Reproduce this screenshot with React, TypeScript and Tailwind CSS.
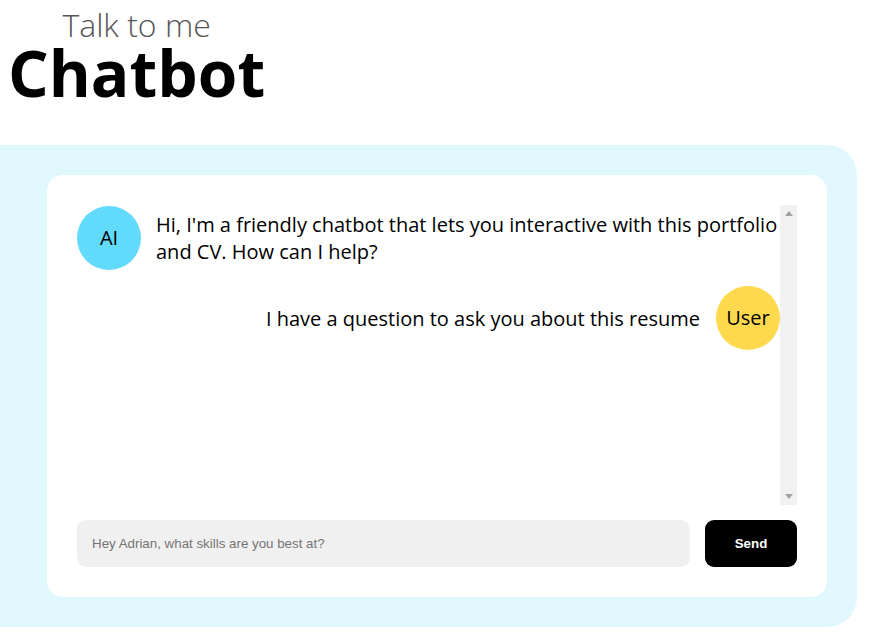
import React from "react";

export default function App() {
  return (
    <div className="w-[884px] h-[637px] bg-white overflow-hidden" style={{ fontFamily: '"Open Sans", sans-serif' }}>
      <div className="pl-[8px] pt-[5px]">
        <div className="inline-block text-center">
          <div className="text-[32px] leading-[40px] font-light text-[#555555]">Talk to me</div>
          <div className="text-[64px] leading-[56px] font-bold text-black">Chatbot</div>
        </div>
      </div>
      <div className="mt-[42px] w-[857px] h-[482px] bg-[#e0f7fd] rounded-r-[30px] pl-[47px] pr-[30px] py-[30px]">
        <div className="w-[780px] h-[422px] bg-white rounded-[16px] p-[30px] flex flex-col gap-[15px]">
          <div className="flex h-[300px]">
            <div className="flex-1 flex flex-col gap-[16px] pt-[1px]">
              <div className="flex items-center gap-[15px]">
                <div className="w-[64px] h-[64px] shrink-0 rounded-full bg-[#61dafb] flex items-center justify-center text-[20px] text-black">AI</div>
                <div className="text-[20px] leading-[27px] text-black">
                  Hi, I'm a friendly chatbot that lets you interactive with this portfolio and CV. How can I help?
                </div>
              </div>
              <div className="flex items-center justify-end gap-[16px]">
                <div className="text-[20px] leading-[27px] text-black">I have a question to ask you about this resume</div>
                <div className="w-[64px] h-[64px] shrink-0 rounded-full bg-[#ffd94d] flex items-center justify-center text-[20px] text-black">User</div>
              </div>
            </div>
            <div className="w-[17px] h-full bg-[#f1f1f1] flex flex-col items-center justify-between py-[6px]">
              <svg width="8" height="5" viewBox="0 0 8 5"><polygon points="4,0 8,5 0,5" fill="#a3a3a3" /></svg>
              <svg width="8" height="5" viewBox="0 0 8 5"><polygon points="0,0 8,0 4,5" fill="#a3a3a3" /></svg>
            </div>
          </div>
          <div className="flex gap-[15px] h-[47px]">
            <div className="flex-1 bg-[#f0f0f0] rounded-[9px] flex items-center pl-[15px] text-[13.333px] text-[#757575]" style={{ fontFamily: '"Liberation Sans", Arial, sans-serif' }}>
              Hey Adrian, what skills are you best at?
            </div>
            <button className="w-[92px] h-[47px] bg-black rounded-[9px] text-white text-[13.333px] font-bold" style={{ fontFamily: '"Liberation Sans", Arial, sans-serif' }}>
              Send
            </button>
          </div>
        </div>
      </div>
    </div>
  );
}
